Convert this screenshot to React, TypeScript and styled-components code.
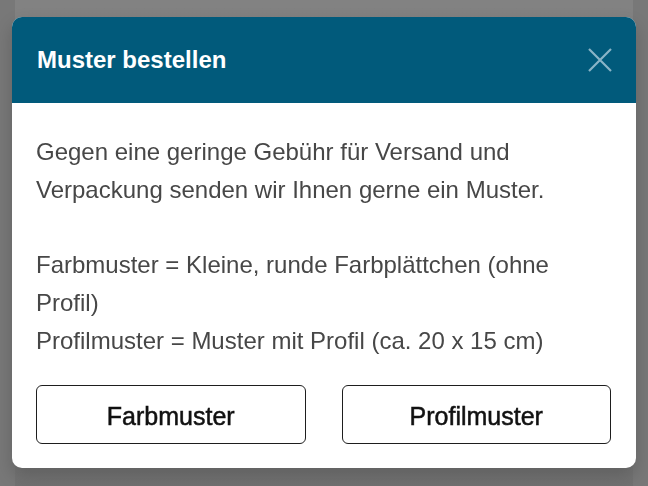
import React from "react";
import styled, { createGlobalStyle } from "styled-components";

const Global = createGlobalStyle`
  html, body { margin: 0; padding: 0; }
  body {
    width: 648px;
    height: 486px;
    overflow: hidden;
    background: #787878;
    font-family: "Liberation Sans", Arial, Helvetica, sans-serif;
  }
`;

const Page = styled.div`
  margin: 0 15px;
  height: 486px;
  background: linear-gradient(#828282 0%, #808080 85%, #717171 100%);
`;

const Overlay = styled.div`
  position: fixed;
  inset: 0;
  display: flex;
  align-items: flex-start;
  padding: 17px 12px 0 12px;
  box-sizing: border-box;
`;

const Modal = styled.div`
  width: 624px;
  height: 451px;
  background: #ffffff;
  border-radius: 10px;
  overflow: hidden;
  display: flex;
  flex-direction: column;
  box-shadow: 0 8px 18px rgba(0, 0, 0, 0.18);
`;

const Header = styled.div`
  height: 86px;
  flex: none;
  background: #015a7b;
  display: flex;
  align-items: center;
  justify-content: space-between;
  padding: 0 24px 0 25px;
  box-sizing: border-box;
`;

const Title = styled.h2`
  margin: 0;
  font-size: 24px;
  font-weight: 700;
  color: #ffffff;
`;

const CloseButton = styled.button`
  width: 24px;
  height: 24px;
  padding: 0;
  border: none;
  background: transparent;
  display: flex;
  cursor: pointer;
`;

const Body = styled.div`
  flex: 1;
  display: flex;
  flex-direction: column;
  padding: 30px 25px 24px 24px;
  box-sizing: border-box;
`;

const Text = styled.p`
  margin: 0;
  font-size: 24px;
  line-height: 37.8px;
  color: #474747;
`;

const Spacer = styled.div`
  height: 37.8px;
`;

const Actions = styled.div`
  margin-top: auto;
  display: grid;
  grid-template-columns: 1fr 1fr;
  gap: 36px;
`;

const ActionButton = styled.button`
  height: 59px;
  padding: 3px 0 0 0;
  background: #ffffff;
  border: 1.8px solid #1e1e1e;
  border-radius: 6px;
  font-family: "Liberation Sans", Arial, Helvetica, sans-serif;
  font-size: 25px;
  color: #111111;
  -webkit-text-stroke: 0.5px #111111;
  cursor: pointer;
`;

export default function App() {
  return (
    <>
      <Global />
      <Page />
      <Overlay>
        <Modal>
          <Header>
            <Title>Muster bestellen</Title>
            <CloseButton aria-label="Schließen">
              <svg width="24" height="24" viewBox="0 0 24 24">
                <path
                  d="M1 1 L23 23 M23 1 L1 23"
                  stroke="#8ab4c7"
                  strokeWidth="2.2"
                  fill="none"
                />
              </svg>
            </CloseButton>
          </Header>
          <Body>
            <Text>
              Gegen eine geringe Gebühr für Versand und
              <br />
              Verpackung senden wir Ihnen gerne ein Muster.
            </Text>
            <Spacer />
            <Text>
              Farbmuster = Kleine, runde Farbplättchen (ohne
              <br />
              Profil)
              <br />
              Profilmuster = Muster mit Profil (ca. 20 x 15 cm)
            </Text>
            <Actions>
              <ActionButton>Farbmuster</ActionButton>
              <ActionButton>Profilmuster</ActionButton>
            </Actions>
          </Body>
        </Modal>
      </Overlay>
    </>
  );
}
